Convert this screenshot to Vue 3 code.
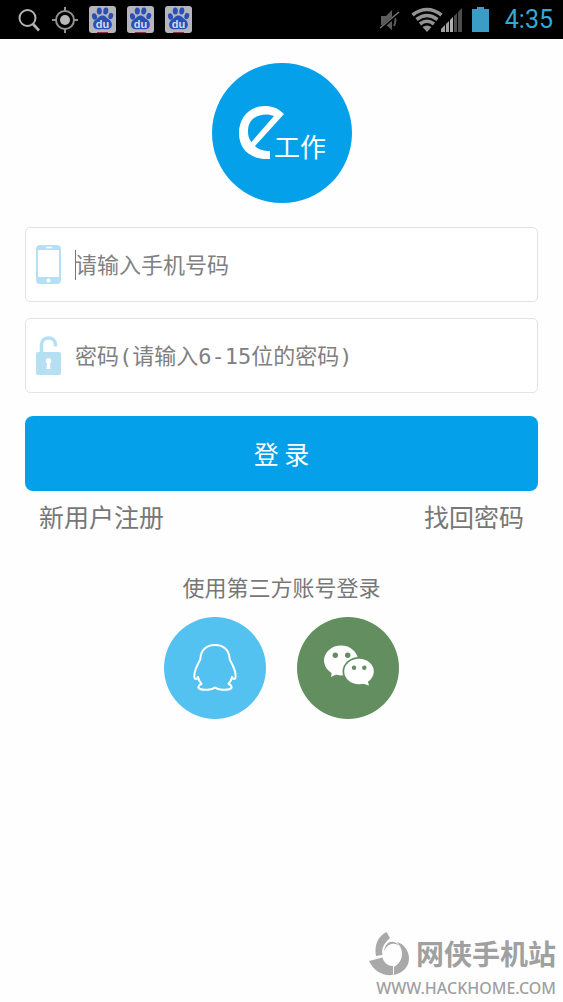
<script setup>
import { ref } from 'vue'

const phone = ref('')
const password = ref('')
const notices = [1, 2, 3]
</script>

<template>
  <div class="screen">
    <header class="status">
      <div class="status-left">
        <svg class="search" viewBox="0 0 24 26" fill="none" stroke="#b4b4b4">
          <circle cx="10.500" cy="11" r="8" stroke-width="2" />
          <path d="M16 17L22 23.500" stroke-width="2.600" />
        </svg>
        <svg class="target" viewBox="0 0 26 26" fill="none" stroke="#929292">
          <circle cx="13" cy="13" r="9" stroke-width="2" />
          <circle cx="13" cy="13" r="5" fill="#b8b8b8" stroke="none" />
          <path d="M13 0V5M13 21V26M0 13H5M21 13H26" stroke-width="2" />
        </svg>
        <svg v-for="n in notices" :key="n" class="paw" viewBox="0 0 27 27">
          <rect width="27" height="27" rx="3" fill="#b5b6bb" />
          <g fill="#2a50b8">
            <ellipse cx="5.500" cy="10.500" rx="2.500" ry="3.300" transform="rotate(-15 5.500 10.500)" />
            <ellipse cx="10.300" cy="5" rx="2.500" ry="3.500" />
            <ellipse cx="16.800" cy="5" rx="2.500" ry="3.500" transform="rotate(8 16.800 5)" />
            <ellipse cx="21.800" cy="10" rx="2.400" ry="3.200" transform="rotate(15 21.800 10)" />
            <path d="M13.500 9.500C10.500 9.500 9.500 12 7 13.500C3 16 3 22.500 8 23.200C10.500 23.500 12 23 13.500 23C15 23 16.500 23.500 19 23.200C24 22.500 24 16 20 13.500C17.500 12 16.500 9.500 13.500 9.500Z" />
          </g>
          <text x="13.500" y="22" text-anchor="middle" class="du">du</text>
          <path d="M8 26.500H19" stroke="#8b3348" stroke-width="1" />
        </svg>
      </div>
      <div class="status-right">
        <svg class="mute" viewBox="0 0 22 24">
          <path d="M2 8H7L13 2V22L7 17H2Z" fill="#5c5c5c" />
          <path d="M15 7Q18 12 15 18" fill="none" stroke="#5c5c5c" stroke-width="2" />
          <path d="M1 21L21 4" stroke="#000" stroke-width="3" />
          <path d="M1 20L20 4" stroke="#777" stroke-width="1.500" />
        </svg>
        <svg class="network" viewBox="0 0 52 26">
          <g fill="none" stroke="#929292" stroke-width="3.600">
            <path d="M1.500 8Q16 -3 30.500 8" />
            <path d="M5.500 12.500Q16 4.500 26.500 12.500" />
            <path d="M9 17Q16 11.500 23 17" />
          </g>
          <path d="M11.500 20Q16 17 20.500 20L16 25Z" fill="#929292" />
          <path d="M30 25V22L34 18V25ZM35 25V17L38 14V25Z" fill="#a0a0a0" />
          <path d="M39 25V13L42 10V25Z" fill="#b0b0b0" />
          <path d="M43 25V9L46 6V25ZM47 25V5L51 1V25Z" fill="#4c4c4c" />
        </svg>
        <svg class="battery" viewBox="0 0 17 25">
          <path d="M5 0H12V2H17V25H0V2H5Z" fill="#3b9cc6" />
        </svg>
        <time class="clock">4:35</time>
      </div>
    </header>

    <main class="content">
      <svg class="logo" viewBox="0 0 140 140" role="img" aria-label="e工作">
        <circle cx="70" cy="70" r="70" fill="#04a0ea" />
        <path fill="#fff" fill-rule="evenodd" d="M72 51C66 45 60 43 53 43C38 43 27 54 27 70C27 87 39 97 58 96V88C51 88 46 86.500 43 83ZM62 53C53 49 36 52 36 68C36 73 37 76 39.500 79Z" />
        <text x="62" y="94" class="logo-text">工作</text>
      </svg>

      <form class="form" @submit.prevent>
        <label class="field">
          <svg class="field-icon" viewBox="0 0 25 39">
            <rect width="25" height="39" rx="4" fill="#b5e0f3" />
            <rect x="2" y="5" width="21" height="27" fill="#fff" />
            <path d="M10 2.500H16" stroke="#fff" stroke-width="1.500" />
            <circle cx="12.500" cy="35.500" r="2" fill="#fff" />
          </svg>
          <span class="caret"></span>
          <input v-model="phone" type="tel" aria-label="手机号码" placeholder="请输入手机号码">
        </label>
        <label class="field">
          <svg class="field-icon" viewBox="0 0 25 39">
            <path d="M5.500 18V9C5.500 -0.500 19.500 -0.500 19.500 9V10.500" fill="none" stroke="#b5e0f3" stroke-width="3.500" />
            <rect y="16" width="25" height="23" rx="2" fill="#b5e0f3" />
            <path d="M12.500 22A3 3 0 0 0 11 27.500L10.500 33H14.500L14 27.500A3 3 0 0 0 12.500 22Z" fill="#fff" />
          </svg>
          <input v-model="password" type="password" aria-label="密码" placeholder="密码(请输入6-15位的密码)">
        </label>
        <button class="login" type="submit">登 录</button>
      </form>

      <nav class="links">
        <a href="#register">新用户注册</a>
        <a href="#recover">找回密码</a>
      </nav>

      <section class="third">
        <h2>使用第三方账号登录</h2>
        <div class="providers">
          <button class="provider qq" type="button" aria-label="QQ">
            <svg viewBox="0 0 102 102">
              <path fill="none" stroke="#fff" stroke-width="2" stroke-linejoin="round" d="M51 28C42 28 36.800 33.500 36.500 41C36.400 44 34.500 45 33.500 48C31 53 30 57 30.500 60.500C31 63 33 62 34 60C34.500 63 35.500 65 37.500 67C34 68 33.500 71 36 72C40 73.500 48 73 51 70.500C54 73 62 73.500 66 72C68.500 71 68 68 64.500 67C66.500 65 67.500 63 68 60C69 62 71 63 71.500 60.500C72 57 71 53 68.500 48C67.500 45 65.600 44 65.500 41C65.200 33.500 60 28 51 28Z" />
            </svg>
          </button>
          <button class="provider wechat" type="button" aria-label="微信">
            <svg viewBox="0 0 102 102">
              <path d="M35 54L34 60L42 56Z" fill="#fff" />
              <ellipse cx="44" cy="43.500" rx="17" ry="15" fill="#fff" />
              <ellipse cx="62" cy="54.500" rx="16.500" ry="14.500" fill="#638f60" />
              <ellipse cx="62" cy="54.500" rx="14.800" ry="12.700" fill="#fff" />
              <path d="M64 66L72 68.500L70 62Z" fill="#fff" />
              <g fill="#638f60">
                <circle cx="38.300" cy="38.300" r="2.700" />
                <circle cx="50.700" cy="38.300" r="2.700" />
                <circle cx="57" cy="50.700" r="2.200" />
                <circle cx="67.300" cy="50.700" r="2.200" />
              </g>
            </svg>
          </button>
        </div>
      </section>
    </main>

    <footer class="site">
      <div class="site-brand">
        <svg viewBox="0 0 41 45" fill="#a9a9a9">
          <path d="M17.500 1L21 7C15 12 12 18 13.500 24L7 25C5 14 9 5 17.500 1Z" />
          <path d="M0 30L13.500 26.500C15 32 19 35 24 35V44C13 45 5 40 0 30Z" />
          <path d="M25 44V36C34 31 36 20 28 11C35 13 40 20 40 27C40 36 34 42 25 44Z" />
          <path d="M15 20C17 10 24 8 31 15C25 11 19 12 15 20Z" />
        </svg>
        <span>网侠手机站</span>
      </div>
      <div class="site-url">WWW.HACKHOME.COM</div>
    </footer>
  </div>
</template>

<style>
body {
  margin: 0;
  background: #fefefe;
}
</style>

<style scoped>
.screen {
  display: flex;
  flex-direction: column;
  min-height: 100vh;
  font-family: "Noto Sans CJK SC", sans-serif;
  color: #777;
}

svg {
  display: block;
  flex: none;
}

.status {
  display: flex;
  justify-content: space-between;
  height: 39px;
  padding: 0 10px 0 17px;
  background: #000;
}

.status-left,
.status-right {
  display: flex;
  align-items: center;
}

.status-left {
  gap: 11px;
}

.search {
  width: 24px;
  height: 26px;
}

.target {
  width: 26px;
  height: 26px;
}

.paw {
  width: 27px;
  height: 27px;
}

.du {
  font: 700 11px "Liberation Sans", sans-serif;
  fill: #d5dcf0;
}

.mute {
  width: 22px;
  height: 24px;
  margin-right: 10px;
}

.network {
  width: 52px;
  height: 26px;
  margin-right: 9px;
}

.battery {
  width: 17px;
  height: 25px;
  margin-right: 16px;
}

.clock {
  font: 400 25px/40px Roboto, sans-serif;
  color: #36a8d6;
}

.content {
  padding: 24px 25px;
}

.logo {
  width: 140px;
  height: 140px;
  margin: 0 auto 24px;
}

.logo-text {
  font-size: 26px;
  font-weight: 400;
  fill: #fff;
}

.form {
  display: flex;
  flex-direction: column;
  gap: 16px;
}

.field {
  position: relative;
  display: flex;
  align-items: center;
  gap: 14px;
  height: 75px;
  box-sizing: border-box;
  padding: 0 10px;
  border: 1px solid #e3e3e3;
  border-radius: 5px;
  background: #fff;
}

.field-icon {
  width: 25px;
  height: 39px;
}

.caret {
  position: absolute;
  left: 49px;
  top: 22px;
  width: 1px;
  height: 30px;
  background: #777;
}

input {
  flex: 1;
  min-width: 0;
  height: 40px;
  padding: 2px 0 0;
  border: 0;
  outline: 0;
  background: transparent;
  font: 400 22px/32px "DejaVu Sans Mono", "Noto Sans CJK SC", monospace;
  color: #777;
}

input::placeholder {
  color: #808080;
  opacity: 1;
}

.login {
  height: 75px;
  margin-top: 7px;
  padding: 0 0 2px;
  border: 0;
  border-radius: 8px;
  background: #04a0ea;
  font: 400 25px/36px "Noto Sans CJK SC", sans-serif;
  color: #fff;
}

.links {
  display: flex;
  justify-content: space-between;
  margin-top: 7px;
  padding: 0 14px;
}

.links a {
  font-size: 25px;
  line-height: 36px;
  color: #777;
  text-decoration: none;
}

.third {
  margin-top: 37px;
}

.third h2 {
  margin: 0 0 16px;
  font-size: 22px;
  font-weight: 400;
  line-height: 30px;
  text-align: center;
}

.providers {
  display: flex;
  justify-content: center;
  gap: 31px;
}

.provider {
  width: 102px;
  height: 102px;
  padding: 0;
  border: 0;
  border-radius: 50%;
}

.provider svg {
  width: 100%;
  height: 100%;
}

.qq {
  background: #54c2f0;
}

.wechat {
  background: #638f60;
}

.site {
  align-self: flex-end;
  margin-top: auto;
  padding: 0 7px 2px 0;
  color: #a0a0a0;
}

.site-brand {
  display: flex;
  align-items: center;
  justify-content: flex-end;
  gap: 6px;
  font-size: 28px;
  font-weight: 700;
  line-height: 45px;
}

.site-brand svg {
  width: 41px;
  height: 45px;
}

.site-url {
  font: 500 16px/24px "Noto Sans", sans-serif;
  text-align: right;
}
</style>
